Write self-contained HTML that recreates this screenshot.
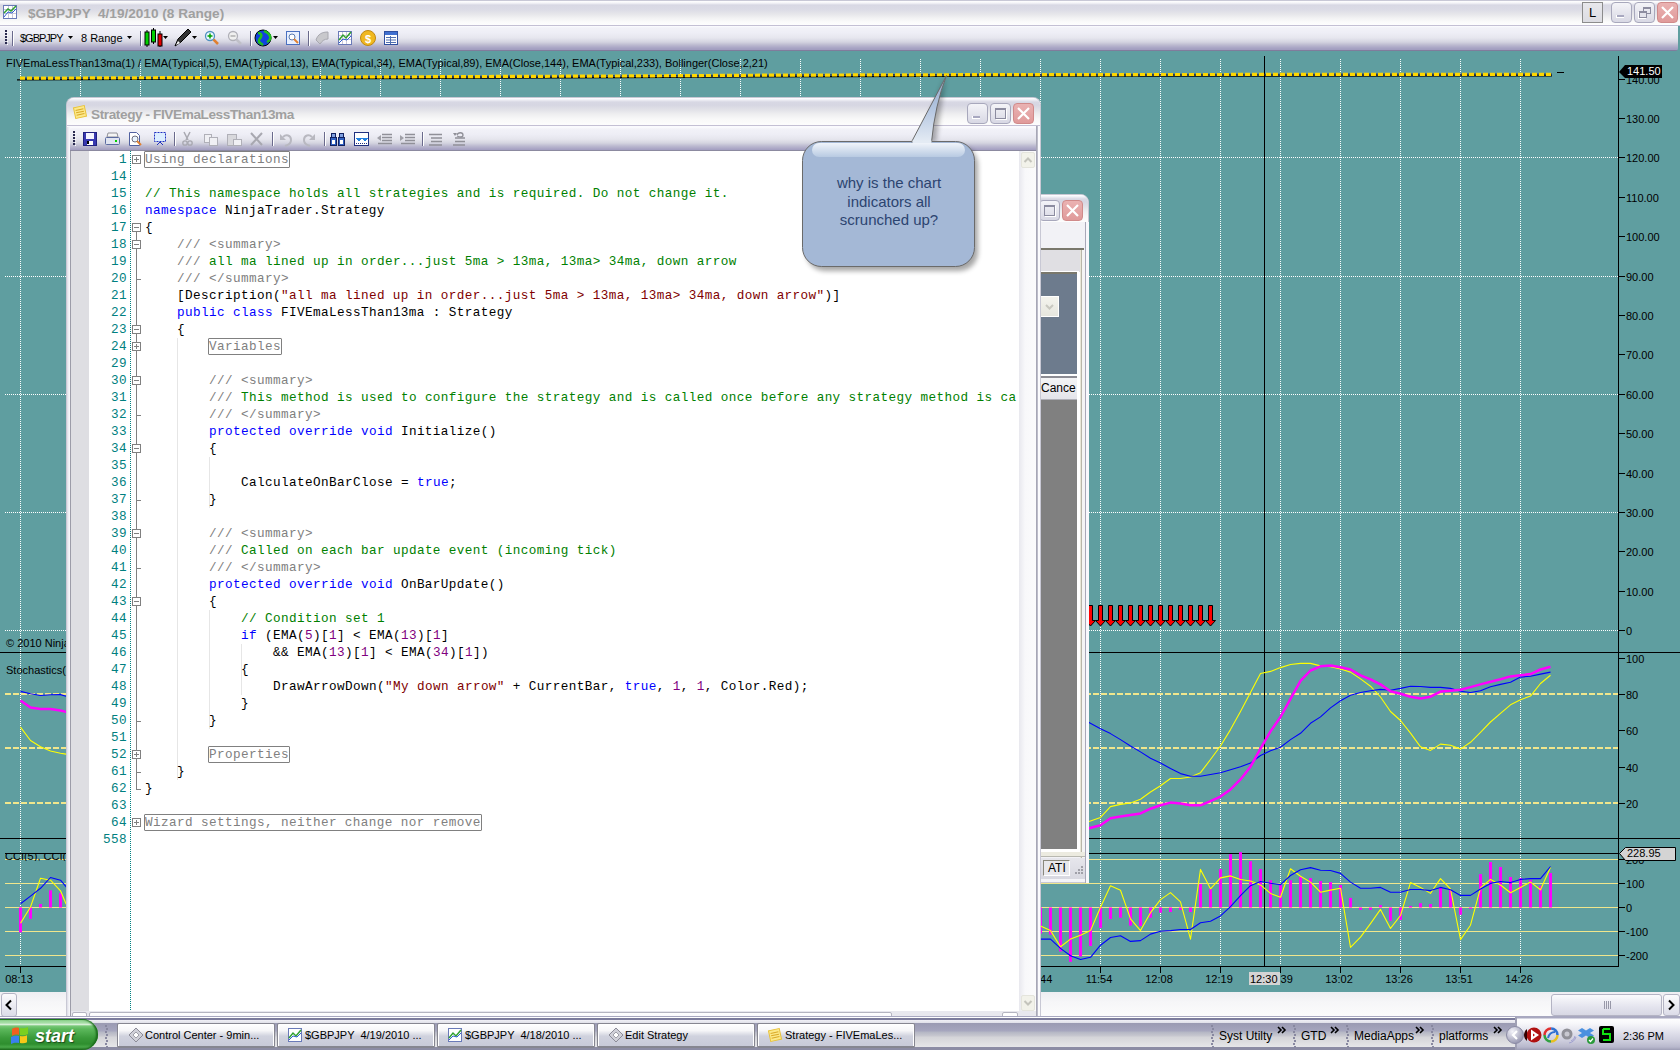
<!DOCTYPE html><html><head><meta charset="utf-8"><style>
*{box-sizing:border-box;margin:0;padding:0}
html,body{width:1680px;height:1050px;overflow:hidden;background:#5f9ea0;font-family:'Liberation Sans', sans-serif}
.a{position:absolute}
.t11{font-size:11px;line-height:13px;color:#000;white-space:nowrap}
svg{position:absolute;left:0;top:0;overflow:visible}
</style></head><body>
<div class="a" style="left:0;top:0;width:1680px;height:26px;background:linear-gradient(#c8c8d6 0,#c8c8d6 1px,#ffffff 1px,#f4f4f8 3px,#d8d8e4 5px,#dcdce6 10px,#e6e6ea 14px,#f2f2f3 18px,#fbfbfb 22px,#fefefe 25px,#c4c0d4 25px,#c4c0d4 26px)"></div>
<div class="a" style="left:28px;top:5px;font:bold 13.6px/17px 'Liberation Sans', sans-serif;color:#a0a0a0;white-space:pre">$GBPJPY  4/19/2010 (8 Range)</div>
<div class="a" style="left:0;top:26px;width:1678px;height:25px;background:linear-gradient(#fcfcff 0,#f2f2f8 2px,#eeeef6 7px,#e6e6ee 12px,#d4d4e0 16px,#bcbad0 19px,#a8a4c4 22px,#a29ec0 23.5px,#807c9c 24px);border-bottom-right-radius:3px"></div>
<svg class="a" width="1680" height="1050"><rect x="3.5" y="5.5" width="13" height="13" fill="#fff" stroke="#6a7ab8"/><path d="M4 9.5h12M4 13.5h12M8.5 6v12M12.5 6v12" stroke="#c8c8d8"/><path d="M4 13L8 9L11 11L16 6" fill="none" stroke="#30a030" stroke-width="1.5"/><path d="M4 17L8 12L12 13L16 9" fill="none" stroke="#3060d0"/></svg><div class="a" style="left:1582px;top:2px;width:21px;height:21px;border:1px solid #8c8c8c;background:linear-gradient(#e8e8ec,#dcdce2);font:13px/19px 'Liberation Sans', sans-serif;text-align:center;color:#000">L</div><div class="a" style="left:1611px;top:2px;width:21px;height:21px;border-radius:4px;border:1px solid #a8a8bc;background:linear-gradient(#f4f4f8,#d8d8e4)"></div><div class="a" style="left:1616px;top:15px;width:8px;height:3px;background:#a8a8c0;border-left:1px solid #fff;border-bottom:1px solid #fff"></div><div class="a" style="left:1634px;top:2px;width:21px;height:21px;border-radius:4px;border:1px solid #a8a8bc;background:linear-gradient(#f4f4f8,#d8d8e4)"></div><div class="a" style="left:1643px;top:7px;width:8px;height:7px;border:1px solid #8c8ca0;border-top:2px solid #8c8ca0"></div><div class="a" style="left:1639px;top:11px;width:8px;height:7px;border:1px solid #8c8ca0;border-top:2px solid #8c8ca0;background:#e4e4ec;box-shadow:-1px 1px 0 #fff"></div><div class="a" style="left:1657px;top:2px;width:21px;height:21px;border-radius:4px;border:1px solid #d08a8a;background:linear-gradient(#eab2b2,#e09a9a)"></div><svg class="a" style="left:1657px;top:2px" width="21" height="21"><path d="M5 5L16 16M16 5L5 16" stroke="#fff" stroke-width="2.2"/></svg><svg class="a" width="1680" height="1050"><rect x="5" y="30" width="2" height="2" fill="#2a2a50"/><rect x="7" y="32" width="1" height="1" fill="#fff"/><rect x="5" y="33" width="2" height="2" fill="#2a2a50"/><rect x="7" y="35" width="1" height="1" fill="#fff"/><rect x="5" y="36" width="2" height="2" fill="#2a2a50"/><rect x="7" y="38" width="1" height="1" fill="#fff"/><rect x="5" y="39" width="2" height="2" fill="#2a2a50"/><rect x="7" y="41" width="1" height="1" fill="#fff"/><rect x="5" y="42" width="2" height="2" fill="#2a2a50"/><rect x="7" y="44" width="1" height="1" fill="#fff"/><line x1="12.5" y1="31" x2="12.5" y2="46" stroke="#6a6a8c"/><line x1="13.5" y1="31" x2="13.5" y2="46" stroke="#fff"/><path d="M68 36h5l-2.5 3z" fill="#000"/><path d="M127 36h5l-2.5 3z" fill="#000"/><line x1="140.5" y1="31" x2="140.5" y2="46" stroke="#6a6a8c"/><line x1="141.5" y1="31" x2="141.5" y2="46" stroke="#fff"/><line x1="147" y1="30" x2="147" y2="47" stroke="#000"/><rect x="145" y="32" width="4" height="13" fill="#00d000" stroke="#000"/><line x1="153.5" y1="28" x2="153.5" y2="44" stroke="#000"/><rect x="151.5" y="30" width="4" height="12" fill="#00d000" stroke="#000"/><line x1="160" y1="31" x2="160" y2="47" stroke="#000"/><rect x="158" y="34" width="4" height="12" fill="#e00000" stroke="#000"/><path d="M163 36h5l-2.5 3z" fill="#000"/><path d="M175 46L178 39L188 29L191 32L181 42z" fill="#333" stroke="#000"/><path d="M176 45l2-4 2 2z" fill="#fff"/><path d="M192 36h5l-2.5 3z" fill="#000"/><circle cx="210" cy="36" r="4.5" fill="#e8f8ff" stroke="#5090c0" stroke-width="1.3"/><path d="M213.5 39.5L218 44" stroke="#e08030" stroke-width="2.5"/><path d="M207.5 36h5M210 33.5v5" stroke="#00a000" stroke-width="1.5"/><circle cx="233" cy="36" r="4.5" fill="#f0f0f0" stroke="#b0b0b8" stroke-width="1.3"/><path d="M236.5 39.5L241 44" stroke="#c0c0c8" stroke-width="2.5"/><path d="M230.5 36h5" stroke="#b0b0b0" stroke-width="1.5"/><line x1="250.5" y1="31" x2="250.5" y2="46" stroke="#6a6a8c"/><line x1="251.5" y1="31" x2="251.5" y2="46" stroke="#fff"/><circle cx="263" cy="38" r="8" fill="#1040e0" stroke="#000" stroke-width="1"/><path d="M258 33c3 0 4 2 3 4s-3 2-2 5c1 1 3 2 4 3M264 31c2 1 5 2 6 5s-1 5-3 6" fill="none" stroke="#20c020" stroke-width="2.5"/><path d="M273 36h5l-2.5 3z" fill="#000"/><rect x="286.5" y="31.5" width="13" height="13" fill="#e8f0ff" stroke="#4a70c0"/><circle cx="292" cy="37" r="3" fill="#fff" stroke="#5a7ab0"/><path d="M294 39l4 4" stroke="#e08030" stroke-width="2"/><line x1="308.5" y1="31" x2="308.5" y2="46" stroke="#6a6a8c"/><line x1="309.5" y1="31" x2="309.5" y2="46" stroke="#fff"/><path d="M316 40c2-6 6-8 12-8v7c-4 0-6 2-8 5z" fill="#c8c8cc" stroke="#a8a8b0"/><rect x="338.5" y="31.5" width="13" height="13" fill="#fff" stroke="#6a7ab8"/><path d="M339 35.5h12M339 39.5h12M342.5 32v12M346.5 32v12" stroke="#c8c8d8"/><path d="M339 40L343 35L346 38L351 32" fill="none" stroke="#30a030" stroke-width="1.5"/><path d="M339 43L343 39L347 40L351 36" fill="none" stroke="#3060d0"/><circle cx="368" cy="38" r="7.5" fill="#f0b820" stroke="#c08810"/><text x="368" y="42.5" font-family="'Liberation Sans', sans-serif" font-weight="bold" font-size="11" fill="#fff" text-anchor="middle">$</text><rect x="384.5" y="31.5" width="13" height="13" fill="#fff" stroke="#3050a0"/><rect x="385" y="32" width="12" height="3" fill="#4070d0"/><path d="M386 37.5h10M386 40h10M386 42.5h10M390.5 36v8" stroke="#5070b0"/></svg><div class="a" style="left:20px;top:32px;font:11px/13px 'Liberation Sans', sans-serif;color:#000;letter-spacing:-1px">$GBPJPY</div><div class="a" style="left:81px;top:32px;font:11px/13px 'Liberation Sans', sans-serif;color:#000">8 Range</div><svg width="1680" height="1050" style="position:absolute;left:0;top:0"><line x1="20.5" y1="59" x2="20.5" y2="964" stroke="#fff" stroke-width="1" stroke-dasharray="1 1"/><line x1="80.5" y1="59" x2="80.5" y2="964" stroke="#fff" stroke-width="1" stroke-dasharray="1 1"/><line x1="140.5" y1="59" x2="140.5" y2="964" stroke="#fff" stroke-width="1" stroke-dasharray="1 1"/><line x1="200.5" y1="59" x2="200.5" y2="964" stroke="#fff" stroke-width="1" stroke-dasharray="1 1"/><line x1="260.5" y1="59" x2="260.5" y2="964" stroke="#fff" stroke-width="1" stroke-dasharray="1 1"/><line x1="320.5" y1="59" x2="320.5" y2="964" stroke="#fff" stroke-width="1" stroke-dasharray="1 1"/><line x1="380.5" y1="59" x2="380.5" y2="964" stroke="#fff" stroke-width="1" stroke-dasharray="1 1"/><line x1="440.5" y1="59" x2="440.5" y2="964" stroke="#fff" stroke-width="1" stroke-dasharray="1 1"/><line x1="500.5" y1="59" x2="500.5" y2="964" stroke="#fff" stroke-width="1" stroke-dasharray="1 1"/><line x1="560.5" y1="59" x2="560.5" y2="964" stroke="#fff" stroke-width="1" stroke-dasharray="1 1"/><line x1="620.5" y1="59" x2="620.5" y2="964" stroke="#fff" stroke-width="1" stroke-dasharray="1 1"/><line x1="680.5" y1="59" x2="680.5" y2="964" stroke="#fff" stroke-width="1" stroke-dasharray="1 1"/><line x1="740.5" y1="59" x2="740.5" y2="964" stroke="#fff" stroke-width="1" stroke-dasharray="1 1"/><line x1="800.5" y1="59" x2="800.5" y2="964" stroke="#fff" stroke-width="1" stroke-dasharray="1 1"/><line x1="860.5" y1="59" x2="860.5" y2="964" stroke="#fff" stroke-width="1" stroke-dasharray="1 1"/><line x1="920.5" y1="59" x2="920.5" y2="964" stroke="#fff" stroke-width="1" stroke-dasharray="1 1"/><line x1="980.5" y1="59" x2="980.5" y2="964" stroke="#fff" stroke-width="1" stroke-dasharray="1 1"/><line x1="1040.5" y1="59" x2="1040.5" y2="964" stroke="#fff" stroke-width="1" stroke-dasharray="1 1"/><line x1="1100.5" y1="59" x2="1100.5" y2="964" stroke="#fff" stroke-width="1" stroke-dasharray="1 1"/><line x1="1160.5" y1="59" x2="1160.5" y2="964" stroke="#fff" stroke-width="1" stroke-dasharray="1 1"/><line x1="1220.5" y1="59" x2="1220.5" y2="964" stroke="#fff" stroke-width="1" stroke-dasharray="1 1"/><line x1="1280.5" y1="59" x2="1280.5" y2="964" stroke="#fff" stroke-width="1" stroke-dasharray="1 1"/><line x1="1340.5" y1="59" x2="1340.5" y2="964" stroke="#fff" stroke-width="1" stroke-dasharray="1 1"/><line x1="1400.5" y1="59" x2="1400.5" y2="964" stroke="#fff" stroke-width="1" stroke-dasharray="1 1"/><line x1="1460.5" y1="59" x2="1460.5" y2="964" stroke="#fff" stroke-width="1" stroke-dasharray="1 1"/><line x1="1520.5" y1="59" x2="1520.5" y2="964" stroke="#fff" stroke-width="1" stroke-dasharray="1 1"/><line x1="5" y1="157.5" x2="1618" y2="157.5" stroke="#fff" stroke-width="1" stroke-dasharray="1 1"/><line x1="5" y1="276.5" x2="1618" y2="276.5" stroke="#fff" stroke-width="1" stroke-dasharray="1 1"/><line x1="5" y1="394.5" x2="1618" y2="394.5" stroke="#fff" stroke-width="1" stroke-dasharray="1 1"/><line x1="5" y1="512.5" x2="1618" y2="512.5" stroke="#fff" stroke-width="1" stroke-dasharray="1 1"/><line x1="5" y1="630.5" x2="1618" y2="630.5" stroke="#fff" stroke-width="1" stroke-dasharray="1 1"/><line x1="5" y1="694" x2="1618" y2="694" stroke="#f0e68c" stroke-width="2" stroke-dasharray="6 2"/><line x1="5" y1="748" x2="1618" y2="748" stroke="#f0e68c" stroke-width="2" stroke-dasharray="6 2"/><line x1="5" y1="803" x2="1618" y2="803" stroke="#f0e68c" stroke-width="2" stroke-dasharray="6 2"/><line x1="5" y1="859.5" x2="1618" y2="859.5" stroke="#f0e68c" stroke-width="1"/><line x1="5" y1="883.5" x2="1618" y2="883.5" stroke="#f0e68c" stroke-width="1"/><line x1="5" y1="907.5" x2="1618" y2="907.5" stroke="#f0e68c" stroke-width="1"/><line x1="5" y1="931.5" x2="1618" y2="931.5" stroke="#f0e68c" stroke-width="1"/><line x1="5" y1="955.5" x2="1618" y2="955.5" stroke="#f0e68c" stroke-width="1"/><line x1="0" y1="652.5" x2="1680" y2="652.5" stroke="#000" stroke-width="1"/><line x1="0" y1="838.5" x2="1680" y2="838.5" stroke="#000" stroke-width="1"/><line x1="5" y1="966.5" x2="1619" y2="966.5" stroke="#000" stroke-width="1"/><line x1="1618.5" y1="56" x2="1618.5" y2="966" stroke="#000" stroke-width="1"/><line x1="1264.5" y1="56" x2="1264.5" y2="966" stroke="#000" stroke-width="1"/><line x1="5" y1="853.5" x2="1618" y2="853.5" stroke="#000" stroke-width="1"/><line x1="1618" y1="79.5" x2="1625" y2="79.5" stroke="#000" stroke-width="1"/><line x1="1618" y1="118.5" x2="1625" y2="118.5" stroke="#000" stroke-width="1"/><line x1="1618" y1="157.5" x2="1625" y2="157.5" stroke="#000" stroke-width="1"/><line x1="1618" y1="197.5" x2="1625" y2="197.5" stroke="#000" stroke-width="1"/><line x1="1618" y1="236.5" x2="1625" y2="236.5" stroke="#000" stroke-width="1"/><line x1="1618" y1="276.5" x2="1625" y2="276.5" stroke="#000" stroke-width="1"/><line x1="1618" y1="315.5" x2="1625" y2="315.5" stroke="#000" stroke-width="1"/><line x1="1618" y1="354.5" x2="1625" y2="354.5" stroke="#000" stroke-width="1"/><line x1="1618" y1="394.5" x2="1625" y2="394.5" stroke="#000" stroke-width="1"/><line x1="1618" y1="433.5" x2="1625" y2="433.5" stroke="#000" stroke-width="1"/><line x1="1618" y1="473.5" x2="1625" y2="473.5" stroke="#000" stroke-width="1"/><line x1="1618" y1="512.5" x2="1625" y2="512.5" stroke="#000" stroke-width="1"/><line x1="1618" y1="551.5" x2="1625" y2="551.5" stroke="#000" stroke-width="1"/><line x1="1618" y1="591.5" x2="1625" y2="591.5" stroke="#000" stroke-width="1"/><line x1="1618" y1="630.5" x2="1625" y2="630.5" stroke="#000" stroke-width="1"/><line x1="1618" y1="658.5" x2="1625" y2="658.5" stroke="#000" stroke-width="1"/><line x1="1618" y1="694.5" x2="1625" y2="694.5" stroke="#000" stroke-width="1"/><line x1="1618" y1="730.5" x2="1625" y2="730.5" stroke="#000" stroke-width="1"/><line x1="1618" y1="767.5" x2="1625" y2="767.5" stroke="#000" stroke-width="1"/><line x1="1618" y1="803.5" x2="1625" y2="803.5" stroke="#000" stroke-width="1"/><line x1="1618" y1="859.5" x2="1625" y2="859.5" stroke="#000" stroke-width="1"/><line x1="1618" y1="883.5" x2="1625" y2="883.5" stroke="#000" stroke-width="1"/><line x1="1618" y1="907.5" x2="1625" y2="907.5" stroke="#000" stroke-width="1"/><line x1="1618" y1="931.5" x2="1625" y2="931.5" stroke="#000" stroke-width="1"/><line x1="1618" y1="955.5" x2="1625" y2="955.5" stroke="#000" stroke-width="1"/><line x1="20.5" y1="967" x2="20.5" y2="973" stroke="#000" stroke-width="1"/><line x1="80.5" y1="967" x2="80.5" y2="973" stroke="#000" stroke-width="1"/><line x1="140.5" y1="967" x2="140.5" y2="973" stroke="#000" stroke-width="1"/><line x1="200.5" y1="967" x2="200.5" y2="973" stroke="#000" stroke-width="1"/><line x1="260.5" y1="967" x2="260.5" y2="973" stroke="#000" stroke-width="1"/><line x1="320.5" y1="967" x2="320.5" y2="973" stroke="#000" stroke-width="1"/><line x1="380.5" y1="967" x2="380.5" y2="973" stroke="#000" stroke-width="1"/><line x1="440.5" y1="967" x2="440.5" y2="973" stroke="#000" stroke-width="1"/><line x1="500.5" y1="967" x2="500.5" y2="973" stroke="#000" stroke-width="1"/><line x1="560.5" y1="967" x2="560.5" y2="973" stroke="#000" stroke-width="1"/><line x1="620.5" y1="967" x2="620.5" y2="973" stroke="#000" stroke-width="1"/><line x1="680.5" y1="967" x2="680.5" y2="973" stroke="#000" stroke-width="1"/><line x1="740.5" y1="967" x2="740.5" y2="973" stroke="#000" stroke-width="1"/><line x1="800.5" y1="967" x2="800.5" y2="973" stroke="#000" stroke-width="1"/><line x1="860.5" y1="967" x2="860.5" y2="973" stroke="#000" stroke-width="1"/><line x1="920.5" y1="967" x2="920.5" y2="973" stroke="#000" stroke-width="1"/><line x1="980.5" y1="967" x2="980.5" y2="973" stroke="#000" stroke-width="1"/><line x1="1040.5" y1="967" x2="1040.5" y2="973" stroke="#000" stroke-width="1"/><line x1="1100.5" y1="967" x2="1100.5" y2="973" stroke="#000" stroke-width="1"/><line x1="1160.5" y1="967" x2="1160.5" y2="973" stroke="#000" stroke-width="1"/><line x1="1220.5" y1="967" x2="1220.5" y2="973" stroke="#000" stroke-width="1"/><line x1="1280.5" y1="967" x2="1280.5" y2="973" stroke="#000" stroke-width="1"/><line x1="1340.5" y1="967" x2="1340.5" y2="973" stroke="#000" stroke-width="1"/><line x1="1400.5" y1="967" x2="1400.5" y2="973" stroke="#000" stroke-width="1"/><line x1="1460.5" y1="967" x2="1460.5" y2="973" stroke="#000" stroke-width="1"/><line x1="1520.5" y1="967" x2="1520.5" y2="973" stroke="#000" stroke-width="1"/><rect x="19.0" y="907.5" width="3" height="24.9" fill="#ff00ff"/><rect x="29.0" y="907.5" width="3" height="11.3" fill="#ff00ff"/><rect x="39.0" y="904.0" width="3" height="3.5" fill="#ff00ff"/><rect x="49.0" y="890.3" width="3" height="17.2" fill="#ff00ff"/><rect x="59.0" y="893.2" width="3" height="14.3" fill="#ff00ff"/><rect x="1039.0" y="907.5" width="3" height="26.1" fill="#ff00ff"/><rect x="1049.0" y="907.5" width="3" height="27.2" fill="#ff00ff"/><rect x="1059.0" y="907.5" width="3" height="43.9" fill="#ff00ff"/><rect x="1069.0" y="907.5" width="3" height="54.3" fill="#ff00ff"/><rect x="1079.0" y="907.5" width="3" height="48.9" fill="#ff00ff"/><rect x="1089.0" y="907.5" width="3" height="38.5" fill="#ff00ff"/><rect x="1099.0" y="907.5" width="3" height="20.4" fill="#ff00ff"/><rect x="1109.0" y="907.5" width="3" height="11.5" fill="#ff00ff"/><rect x="1119.0" y="907.5" width="3" height="10.2" fill="#ff00ff"/><rect x="1129.0" y="907.5" width="3" height="18.1" fill="#ff00ff"/><rect x="1139.0" y="907.5" width="3" height="18.4" fill="#ff00ff"/><rect x="1149.0" y="907.5" width="3" height="10.2" fill="#ff00ff"/><rect x="1159.0" y="907.5" width="3" height="5.2" fill="#ff00ff"/><rect x="1169.0" y="907.5" width="3" height="4.5" fill="#ff00ff"/><rect x="1179.0" y="907.5" width="3" height="2.5" fill="#ff00ff"/><rect x="1189.0" y="907.5" width="3" height="4.5" fill="#ff00ff"/><rect x="1199.0" y="884.1" width="3" height="23.4" fill="#ff00ff"/><rect x="1209.0" y="889.2" width="3" height="18.3" fill="#ff00ff"/><rect x="1219.0" y="869.1" width="3" height="38.4" fill="#ff00ff"/><rect x="1229.0" y="854.2" width="3" height="53.3" fill="#ff00ff"/><rect x="1239.0" y="852.1" width="3" height="55.4" fill="#ff00ff"/><rect x="1249.0" y="861.2" width="3" height="46.3" fill="#ff00ff"/><rect x="1259.0" y="869.1" width="3" height="38.4" fill="#ff00ff"/><rect x="1269.0" y="880.2" width="3" height="27.3" fill="#ff00ff"/><rect x="1279.0" y="884.9" width="3" height="22.6" fill="#ff00ff"/><rect x="1289.0" y="880.2" width="3" height="27.3" fill="#ff00ff"/><rect x="1299.0" y="877.0" width="3" height="30.5" fill="#ff00ff"/><rect x="1309.0" y="878.1" width="3" height="29.4" fill="#ff00ff"/><rect x="1319.0" y="881.0" width="3" height="26.5" fill="#ff00ff"/><rect x="1329.0" y="882.1" width="3" height="25.4" fill="#ff00ff"/><rect x="1339.0" y="885.0" width="3" height="22.5" fill="#ff00ff"/><rect x="1349.0" y="897.9" width="3" height="9.6" fill="#ff00ff"/><rect x="1359.0" y="907.5" width="3" height="2.4" fill="#ff00ff"/><rect x="1369.0" y="907.5" width="3" height="2.4" fill="#ff00ff"/><rect x="1379.0" y="905.0" width="3" height="2.5" fill="#ff00ff"/><rect x="1389.0" y="907.5" width="3" height="13.3" fill="#ff00ff"/><rect x="1399.0" y="907.5" width="3" height="12.4" fill="#ff00ff"/><rect x="1409.0" y="905.9" width="3" height="1.6" fill="#ff00ff"/><rect x="1419.0" y="903.2" width="3" height="4.3" fill="#ff00ff"/><rect x="1429.0" y="904.0" width="3" height="3.5" fill="#ff00ff"/><rect x="1439.0" y="887.9" width="3" height="19.6" fill="#ff00ff"/><rect x="1449.0" y="889.8" width="3" height="17.7" fill="#ff00ff"/><rect x="1459.0" y="907.5" width="3" height="7.2" fill="#ff00ff"/><rect x="1469.0" y="907.5" width="3" height="1.3" fill="#ff00ff"/><rect x="1479.0" y="874.1" width="3" height="33.4" fill="#ff00ff"/><rect x="1489.0" y="862.0" width="3" height="45.5" fill="#ff00ff"/><rect x="1499.0" y="867.0" width="3" height="40.5" fill="#ff00ff"/><rect x="1509.0" y="877.0" width="3" height="30.5" fill="#ff00ff"/><rect x="1519.0" y="878.1" width="3" height="29.4" fill="#ff00ff"/><rect x="1529.0" y="879.9" width="3" height="27.6" fill="#ff00ff"/><rect x="1539.0" y="885.8" width="3" height="21.7" fill="#ff00ff"/><rect x="1549.0" y="873.0" width="3" height="34.5" fill="#ff00ff"/><polyline fill="none" stroke="#ffff00" stroke-width="1.1" stroke-linejoin="round" points="20.5,923.2 30.5,907.0 40.5,878.3 50.5,880.2 60.5,890.8 66.0,903.7 80.5,924.8"/><polyline fill="none" stroke="#0000ff" stroke-width="1.1" stroke-linejoin="round" points="20.5,903.7 30.5,896.1 40.5,888.3 50.5,877.5 60.5,880.2 66.0,886.7 80.5,897.3"/><polyline fill="none" stroke="#ffff00" stroke-width="1.1" stroke-linejoin="round" points="1040.5,925.9 1050.5,930.6 1060.5,946.8 1070.5,939.1 1080.5,935.2 1090.5,930.6 1100.5,907.3 1110.5,885.7 1120.5,890.3 1130.5,918.9 1140.5,930.6 1150.5,912.7 1160.5,899.6 1170.5,892.6 1180.5,901.9 1190.5,939.1 1200.5,869.4 1210.5,888.8 1220.5,877.9 1230.5,875.9 1240.5,879.5 1250.5,881.0 1260.5,884.9 1270.5,893.4 1280.5,897.3 1290.5,868.8 1300.5,876.2 1310.5,882.1 1320.5,892.2 1330.5,890.1 1340.5,888.2 1350.5,947.4 1360.5,937.2 1370.5,923.6 1380.5,909.4 1390.5,928.4 1400.5,915.5 1410.5,882.6 1420.5,887.4 1430.5,893.4 1440.5,878.6 1450.5,889.0 1460.5,939.6 1470.5,925.2 1480.5,887.9 1490.5,879.4 1500.5,885.0 1510.5,892.7 1520.5,887.4 1530.5,882.1 1540.5,889.8 1550.5,867.3"/><polyline fill="none" stroke="#0000ff" stroke-width="1.1" stroke-linejoin="round" points="1040.5,939.1 1050.5,939.1 1060.5,948.4 1070.5,955.8 1080.5,959.5 1090.5,957.3 1100.5,945.2 1110.5,937.5 1120.5,935.7 1130.5,941.4 1140.5,940.6 1150.5,934.1 1160.5,931.3 1170.5,930.6 1180.5,929.5 1190.5,929.5 1200.5,922.8 1210.5,921.3 1220.5,915.9 1230.5,906.6 1240.5,895.7 1250.5,885.7 1260.5,881.5 1270.5,883.3 1280.5,884.6 1290.5,875.5 1300.5,869.7 1310.5,867.6 1320.5,870.2 1330.5,870.5 1340.5,873.4 1350.5,882.1 1360.5,888.2 1370.5,888.2 1380.5,887.4 1390.5,892.2 1400.5,892.2 1410.5,889.5 1420.5,889.5 1430.5,890.6 1440.5,887.4 1450.5,889.8 1460.5,895.4 1470.5,895.4 1480.5,889.0 1490.5,883.4 1500.5,881.5 1510.5,882.6 1520.5,879.4 1530.5,878.6 1540.5,878.6 1550.5,866.5"/><polyline fill="none" stroke="#ffff00" stroke-width="1.1" stroke-linejoin="round" points="20.5,727.1 30.5,740.5 40.5,746.7 50.5,751.0 60.5,753.3 66.0,754.1 80.5,755.3"/><polyline fill="none" stroke="#0000ff" stroke-width="1.1" stroke-linejoin="round" points="20.5,691.4 30.5,693.8 40.5,695.5 50.5,694.8 60.5,694.6 66.0,696.2 80.5,698.6"/><polyline fill="none" stroke="#ff00ff" stroke-width="2.5" stroke-linejoin="round" points="20.5,700.5 30.5,707.6 40.5,709.0 50.5,709.0 60.5,710.5 66.0,711.9 80.5,714.0"/><polyline fill="none" stroke="#ffff00" stroke-width="1.1" stroke-linejoin="round" points="1080.5,824.0 1089.0,821.6 1100.5,817.4 1110.5,806.6 1120.5,804.4 1130.5,803.0 1140.5,799.3 1150.5,792.0 1160.5,785.7 1170.5,778.5 1180.5,778.5 1190.5,777.0 1200.5,772.7 1210.5,759.5 1220.5,746.0 1230.5,729.6 1240.5,711.5 1250.5,692.5 1260.5,673.5 1270.5,671.4 1280.5,667.6 1290.5,664.5 1300.5,663.4 1310.5,663.4 1320.5,665.9 1330.5,666.6 1340.5,669.0 1350.5,672.1 1360.5,678.9 1370.5,686.2 1380.5,697.0 1390.5,711.5 1400.5,720.5 1410.5,733.2 1420.5,746.8 1430.5,750.4 1440.5,744.1 1450.5,745.3 1460.5,749.1 1470.5,742.3 1480.5,732.3 1490.5,722.0 1500.5,713.3 1510.5,704.8 1520.5,699.7 1530.5,696.1 1540.5,683.5 1550.5,675.3"/><polyline fill="none" stroke="#0000ff" stroke-width="1.1" stroke-linejoin="round" points="1080.5,723.0 1089.0,722.4 1100.5,728.7 1110.5,733.6 1120.5,739.6 1130.5,746.0 1140.5,751.9 1150.5,758.2 1160.5,763.1 1170.5,768.6 1180.5,773.6 1190.5,776.3 1200.5,776.3 1210.5,774.5 1220.5,772.7 1230.5,769.8 1240.5,766.7 1250.5,763.1 1260.5,755.5 1270.5,750.8 1280.5,747.2 1290.5,739.6 1300.5,733.3 1310.5,723.3 1320.5,716.9 1330.5,707.9 1340.5,700.7 1350.5,695.2 1360.5,692.5 1370.5,690.7 1380.5,689.4 1390.5,690.2 1400.5,688.4 1410.5,686.2 1420.5,686.5 1430.5,687.4 1440.5,687.4 1450.5,688.4 1460.5,691.2 1470.5,692.5 1480.5,690.7 1490.5,686.7 1500.5,684.4 1510.5,682.2 1520.5,677.1 1530.5,676.2 1540.5,674.1 1550.5,672.1"/><polyline fill="none" stroke="#ff00ff" stroke-width="2.5" stroke-linejoin="round" points="1080.5,830.0 1089.0,828.3 1100.5,825.2 1110.5,818.3 1120.5,816.5 1130.5,815.0 1140.5,813.4 1150.5,808.7 1160.5,805.3 1170.5,802.6 1180.5,803.5 1190.5,805.3 1200.5,805.3 1210.5,801.1 1220.5,796.6 1230.5,789.4 1240.5,779.4 1250.5,766.7 1260.5,748.6 1270.5,731.4 1280.5,717.0 1290.5,698.9 1300.5,680.8 1310.5,670.5 1320.5,666.3 1330.5,665.4 1340.5,667.2 1350.5,669.5 1360.5,675.3 1370.5,679.3 1380.5,684.4 1390.5,691.2 1400.5,693.8 1410.5,696.7 1420.5,698.5 1430.5,696.7 1440.5,691.6 1450.5,690.7 1460.5,689.8 1470.5,687.1 1480.5,684.4 1490.5,681.7 1500.5,679.3 1510.5,676.4 1520.5,675.3 1530.5,674.1 1540.5,669.5 1550.5,666.8"/></svg><div class="a t11" style="left:1626px;top:74px">140.00</div><div class="a t11" style="left:1626px;top:113px">130.00</div><div class="a t11" style="left:1626px;top:152px">120.00</div><div class="a t11" style="left:1626px;top:192px">110.00</div><div class="a t11" style="left:1626px;top:231px">100.00</div><div class="a t11" style="left:1626px;top:271px">90.00</div><div class="a t11" style="left:1626px;top:310px">80.00</div><div class="a t11" style="left:1626px;top:349px">70.00</div><div class="a t11" style="left:1626px;top:389px">60.00</div><div class="a t11" style="left:1626px;top:428px">50.00</div><div class="a t11" style="left:1626px;top:468px">40.00</div><div class="a t11" style="left:1626px;top:507px">30.00</div><div class="a t11" style="left:1626px;top:546px">20.00</div><div class="a t11" style="left:1626px;top:586px">10.00</div><div class="a t11" style="left:1626px;top:625px">0</div><div class="a t11" style="left:1626px;top:653px">100</div><div class="a t11" style="left:1626px;top:689px">80</div><div class="a t11" style="left:1626px;top:725px">60</div><div class="a t11" style="left:1626px;top:762px">40</div><div class="a t11" style="left:1626px;top:798px">20</div><div class="a t11" style="left:1626px;top:854px">200</div><div class="a t11" style="left:1626px;top:878px">100</div><div class="a t11" style="left:1626px;top:902px">0</div><div class="a t11" style="left:1626px;top:926px">-100</div><div class="a t11" style="left:1626px;top:950px">-200</div><style>.code{font-family:"Liberation Mono",monospace;font-size:12.67px;line-height:17px;white-space:pre;letter-spacing:0.4px}</style><svg class="a" width="1680" height="1050"><polyline points="17,79.8 300,78.8 620,77.6 760,76.8 1000,76.19999999999999 1552,75.89999999999999" fill="none" stroke="#000" stroke-width="1.3"/><polyline points="20,78.2 300,77.2 620,76 760,75.2 1000,74.6 1552,74.3" fill="none" stroke="#ffd700" stroke-width="3.2" stroke-dasharray="5 2"/><polyline points="20,78.2 300,77.2 620,76 760,75.2 1000,74.6 1552,74.3" fill="none" stroke="#202040" stroke-width="1.6" stroke-dasharray="1.5 5.5" stroke-dashoffset="-5.2"/><line x1="1557" y1="72.5" x2="1564" y2="72.5" stroke="#000" stroke-width="1"/><path d="M1088.5 605.5H1092.5V620.5H1095.5L1090.5 626L1085.5 620.5H1088.5Z" fill="#ff0000" stroke="#000" stroke-width="1"/><path d="M1098.5 605.5H1102.5V620.5H1105.5L1100.5 626L1095.5 620.5H1098.5Z" fill="#ff0000" stroke="#000" stroke-width="1"/><path d="M1108.5 605.5H1112.5V620.5H1115.5L1110.5 626L1105.5 620.5H1108.5Z" fill="#ff0000" stroke="#000" stroke-width="1"/><path d="M1118.5 605.5H1122.5V620.5H1125.5L1120.5 626L1115.5 620.5H1118.5Z" fill="#ff0000" stroke="#000" stroke-width="1"/><path d="M1128.5 605.5H1132.5V620.5H1135.5L1130.5 626L1125.5 620.5H1128.5Z" fill="#ff0000" stroke="#000" stroke-width="1"/><path d="M1138.5 605.5H1142.5V620.5H1145.5L1140.5 626L1135.5 620.5H1138.5Z" fill="#ff0000" stroke="#000" stroke-width="1"/><path d="M1148.5 605.5H1152.5V620.5H1155.5L1150.5 626L1145.5 620.5H1148.5Z" fill="#ff0000" stroke="#000" stroke-width="1"/><path d="M1158.5 605.5H1162.5V620.5H1165.5L1160.5 626L1155.5 620.5H1158.5Z" fill="#ff0000" stroke="#000" stroke-width="1"/><path d="M1168.5 605.5H1172.5V620.5H1175.5L1170.5 626L1165.5 620.5H1168.5Z" fill="#ff0000" stroke="#000" stroke-width="1"/><path d="M1178.5 605.5H1182.5V620.5H1185.5L1180.5 626L1175.5 620.5H1178.5Z" fill="#ff0000" stroke="#000" stroke-width="1"/><path d="M1188.5 605.5H1192.5V620.5H1195.5L1190.5 626L1185.5 620.5H1188.5Z" fill="#ff0000" stroke="#000" stroke-width="1"/><path d="M1198.5 605.5H1202.5V620.5H1205.5L1200.5 626L1195.5 620.5H1198.5Z" fill="#ff0000" stroke="#000" stroke-width="1"/><path d="M1208.5 605.5H1212.5V620.5H1215.5L1210.5 626L1205.5 620.5H1208.5Z" fill="#ff0000" stroke="#000" stroke-width="1"/></svg><div class="a t11" style="left:6px;top:57px">FIVEmaLessThan13ma(1) / EMA(Typical,5), EMA(Typical,13), EMA(Typical,34), EMA(Typical,89), EMA(Close,144), EMA(Typical,233), Bollinger(Close,2,21)</div><div class="a t11" style="left:6px;top:637px">&copy; 2010 NinjaTrader</div><div class="a t11" style="left:6px;top:664px">Stochastics(7,14,3)</div><div class="a" style="left:5px;top:853px;width:1200px;height:8px;overflow:hidden"><div class="a t11" style="left:0;top:-3px">CCI(5), CCI(14)</div></div><div class="a t11" style="left:-11px;top:973px;width:60px;text-align:center">08:13</div><div class="a t11" style="left:1009px;top:973px;width:60px;text-align:center">11:44</div><div class="a t11" style="left:1069px;top:973px;width:60px;text-align:center">11:54</div><div class="a t11" style="left:1129px;top:973px;width:60px;text-align:center">12:08</div><div class="a t11" style="left:1189px;top:973px;width:60px;text-align:center">12:19</div><div class="a t11" style="left:1249px;top:973px;width:60px;text-align:center">12:39</div><div class="a t11" style="left:1309px;top:973px;width:60px;text-align:center">13:02</div><div class="a t11" style="left:1369px;top:973px;width:60px;text-align:center">13:26</div><div class="a t11" style="left:1429px;top:973px;width:60px;text-align:center">13:51</div><div class="a t11" style="left:1489px;top:973px;width:60px;text-align:center">14:26</div><div class="a t11" style="left:1249px;top:972px;width:31px;height:13px;background:#d4d4d4;padding-left:1px;line-height:14px">12:30</div><svg class="a" width="1680" height="1050"><path d="M1619 72L1625 65H1662V78H1625z" fill="#000"/></svg><div class="a t11" style="left:1627px;top:65px;color:#fff;line-height:13px">141.50</div><svg class="a" width="1680" height="1050"><path d="M1619.5 853.5L1625.5 847.5H1675.5V860.5H1625.5z" fill="#d4d4d4" stroke="#000"/></svg><div class="a t11" style="left:1627px;top:847px">228.95</div><div class="a" style="left:0;top:992px;width:1680px;height:25px;background:linear-gradient(#eeeef2,#f6f6f8 10px,#fbfbfc)"></div><div class="a" style="left:1px;top:993px;width:16px;height:24px;border:1px solid #b4b4c4;border-radius:3px;background:linear-gradient(#fbfbfd,#dcdce8)"></div><svg class="a" style="left:1px;top:993px" width="16" height="24"><path d="M10 7.5L5.5 12L10 16.5" fill="none" stroke="#000" stroke-width="2"/></svg><div class="a" style="left:1551px;top:994px;width:111px;height:22px;border:1px solid #b4b4c4;border-radius:3px;background:linear-gradient(#fbfbfd,#e4e4ee 60%,#d8d8e4)"></div><svg class="a" style="left:1551px;top:994px" width="111" height="22"><path d="M53.5 7v8M55.5 7v8M57.5 7v8M59.5 7v8" stroke="#9898a8"/></svg><div class="a" style="left:1663px;top:994px;width:17px;height:22px;border:1px solid #b4b4c4;border-radius:3px;background:linear-gradient(#fbfbfd,#dcdce8)"></div><svg class="a" style="left:1663px;top:994px" width="17" height="22"><path d="M6 6.5L10.5 11L6 15.5" fill="none" stroke="#000" stroke-width="2"/></svg><div class="a" style="left:1000px;top:194px;width:89px;height:689px;background:#f4f4f8;border:1px solid #c8c8d4;border-radius:0 8px 0 0"></div><div class="a" style="left:1001px;top:195px;width:87px;height:27px;background:linear-gradient(#ffffff 0,#f8f8fc 1px,#d8d8e4 4px,#d6d6e2 7px,#e2e2e8 12px,#eeeef0 16px,#f8f8f8 21px,#fdfdfd 27px);border-radius:0 7px 0 0"></div><div class="a" style="left:1039px;top:200px;width:21px;height:21px;border-radius:4px;border:1px solid #a8a8bc;background:linear-gradient(#f4f4f8,#d8d8e4)"></div><div class="a" style="left:1044px;top:205px;width:11px;height:11px;border:1px solid #8c8ca0;border-top:2px solid #8c8ca0;box-shadow:1px 1px 0 #fff"></div><div class="a" style="left:1062px;top:200px;width:21px;height:21px;border-radius:4px;border:1px solid #d08a8a;background:linear-gradient(#eab2b2,#e09a9a)"></div><svg class="a" style="left:1062px;top:200px" width="21" height="21"><path d="M5 5L16 16M16 5L5 16" stroke="#fff" stroke-width="2.2"/></svg><div class="a" style="left:1001px;top:222px;width:84px;height:657px;background:#f2f2f6"></div><div class="a" style="left:1001px;top:248px;width:83px;height:2px;background:#7a786c"></div><div class="a" style="left:1001px;top:250px;width:80px;height:607px;background:#e0dfe3;border-right:1px solid #fff"></div><div class="a" style="left:1001px;top:271px;width:78px;height:105px;background:#fff"></div><div class="a" style="left:1001px;top:272px;width:76px;height:102px;background:#6d7b8d;border-top:2px solid #7a786c"></div><div class="a" style="left:1040px;top:296px;width:19px;height:21px;background:#fff;border:1px solid #fff"></div><div class="a" style="left:1041px;top:297px;width:17px;height:19px;background:linear-gradient(#f4f4ee,#e6e6de)"></div><svg class="a" style="left:1041px;top:297px" width="17" height="19"><path d="M5 8L8.5 11.5L12 8" fill="none" stroke="#c8c8c0" stroke-width="2"/></svg><div class="a" style="left:1001px;top:376px;width:76px;height:24px;background:linear-gradient(#f4f4f6,#e4e4ea);border-top:2px solid #8c8c94;border-bottom:1px solid #b0b0b8"></div><div class="a" style="left:1041px;top:381px;font:12px/15px 'Liberation Sans', sans-serif;color:#000">Cance</div><div class="a" style="left:1001px;top:400px;width:76px;height:449px;background:#808080"></div><div class="a" style="left:1001px;top:849px;width:79px;height:3px;background:#fff"></div><div class="a" style="left:1077px;top:272px;width:3px;height:580px;background:#fff"></div><div class="a" style="left:1080px;top:250px;width:5px;height:608px;background:linear-gradient(90deg,#e8e6d8 0,#e8e6d8 1px,#b8b6a8 1px,#b8b6a8 2px,#f4f4f4 2px)"></div><div class="a" style="left:1001px;top:852px;width:84px;height:5px;background:#ecebe0;border-bottom:1px solid #b8b8b0"></div><div class="a" style="left:1001px;top:858px;width:84px;height:21px;background:linear-gradient(#e6e6ec,#d8d8e0)"></div><div class="a" style="left:1043px;top:860px;width:27px;height:16px;background:#e8e8ec;border:1px solid;border-color:#8a887c #fff #fff #8a887c"></div><div class="a" style="left:1048px;top:861px;font:12px/14px 'Liberation Sans', sans-serif;color:#000">ATI</div><svg class="a" width="1680" height="1050"><rect x="1081" y="866" width="2" height="2" fill="#a0a0a8"/><rect x="1078" y="869" width="2" height="2" fill="#a0a0a8"/><rect x="1081" y="869" width="2" height="2" fill="#a0a0a8"/><rect x="1075" y="872" width="2" height="2" fill="#a0a0a8"/><rect x="1078" y="872" width="2" height="2" fill="#a0a0a8"/><rect x="1081" y="872" width="2" height="2" fill="#a0a0a8"/></svg><div class="a" style="left:1085px;top:222px;width:4px;height:661px;background:linear-gradient(90deg,#a8a8b8 0,#a8a8b8 1.3px,#f8f8fc 1.3px)"></div><div class="a" style="left:66px;top:97px;width:975px;height:960px;background:linear-gradient(90deg,#dcdce6,#f4f4f8 2px,#fbfbfd 4px);border-radius:8px 8px 0 0;border:1px solid #c8c8d4;border-bottom:none"></div><div class="a" style="left:67px;top:98px;width:973px;height:29px;background:linear-gradient(#ffffff 0,#f8f8fc 1px,#d8d8e4 4px,#d6d6e2 7px,#e2e2e8 12px,#eeeef0 16px,#f8f8f8 21px,#fdfdfd 27px,#c4c0d4 27px,#c4c0d4 28px,#fafafe 28px);border-radius:7px 7px 0 0"></div><div class="a" style="left:91px;top:106px;font:bold 13.6px/17px 'Liberation Sans', sans-serif;color:#a0a0a0;white-space:pre;letter-spacing:-0.4px">Strategy - FIVEmaLessThan13ma</div><svg class="a" style="left:72px;top:104px" width="16" height="16"><g transform="rotate(-12 8 8)"><rect x="2.5" y="2.5" width="11" height="11" fill="#fce98a" stroke="#e8c23a"/><line x1="4" y1="5.5" x2="12" y2="5.5" stroke="#d9a928"/><line x1="4" y1="8" x2="12" y2="8" stroke="#d9a928"/><line x1="4" y1="10.5" x2="12" y2="10.5" stroke="#d9a928"/></g></svg><div class="a" style="left:967px;top:103px;width:21px;height:21px;border-radius:4px;border:1px solid #a8a8bc;background:linear-gradient(#f4f4f8,#d8d8e4)"></div><div class="a" style="left:972px;top:116px;width:8px;height:3px;background:#a8a8c0;border-left:1px solid #fff;border-bottom:1px solid #fff"></div><div class="a" style="left:990px;top:103px;width:21px;height:21px;border-radius:4px;border:1px solid #a8a8bc;background:linear-gradient(#f4f4f8,#d8d8e4)"></div><div class="a" style="left:995px;top:108px;width:11px;height:11px;border:1px solid #8c8ca0;border-top:2px solid #8c8ca0;box-shadow:1px 1px 0 #fff"></div><div class="a" style="left:1013px;top:103px;width:21px;height:21px;border-radius:4px;border:1px solid #d08a8a;background:linear-gradient(#eab2b2,#e09a9a)"></div><svg class="a" style="left:1013px;top:103px" width="21" height="21"><path d="M5 5L16 16M16 5L5 16" stroke="#fff" stroke-width="2.2"/></svg><div class="a" style="left:70px;top:127px;width:966px;height:24px;background:linear-gradient(#fcfcff 0,#f2f2f8 2px,#eeeef6 7px,#e6e6ee 12px,#d4d4e0 16px,#bcbad0 19px,#a8a4c4 22px,#a29ec0 23px,#8c8aa0 23px);border-radius:3px 3px 0 0"></div><div class="a" style="left:70px;top:151px;width:966px;height:870px;background:#fff;border-left:1px solid #9c9ca8"></div><div class="a" style="left:71px;top:151px;width:18px;height:860px;background:#dedee2"></div><div class="a" style="left:130px;top:151px;width:1px;height:860px;background:repeating-linear-gradient(#008080 0,#008080 1px,transparent 1px,transparent 2px)"></div><div class="a" style="left:1019px;top:151px;width:17px;height:860px;background:linear-gradient(90deg,#e8e8ee,#f8f8fa 6px,#fbfbfc)"></div><div class="a" style="left:1021px;top:152px;width:14px;height:16px;border:1px solid #e4e4dc;border-radius:2px;background:#f2f2ea"></div><svg class="a" style="left:1021px;top:152px" width="14" height="16"><path d="M3.5 10L7 6.5L10.5 10" fill="none" stroke="#c4c4bc" stroke-width="2"/></svg><div class="a" style="left:1021px;top:995px;width:14px;height:16px;border:1px solid #e4e4dc;border-radius:2px;background:#f2f2ea"></div><svg class="a" style="left:1021px;top:995px" width="14" height="16"><path d="M3.5 6L7 9.5L10.5 6" fill="none" stroke="#c4c4bc" stroke-width="2"/></svg><div class="a" style="left:1036px;top:126px;width:2px;height:900px;background:linear-gradient(90deg,#9c9cac,#c8c8d4)"></div><div class="a" style="left:71px;top:1011px;width:965px;height:6px;background:#e8e8ee"></div><div class="a" style="left:72px;top:1012px;width:15px;height:8px;background:#fff;border:1px solid #b4b4c0;border-radius:2px"></div><div class="a" style="left:89px;top:1012px;width:803px;height:8px;background:linear-gradient(#fff,#f4f4f8);border:1px solid #b4b4c0;border-radius:2px"></div><div class="a" style="left:1002px;top:1012px;width:16px;height:8px;background:#fff;border:1px solid #b4b4c0;border-radius:2px"></div><svg class="a" width="1680" height="1050"><line x1="136.5" y1="231" x2="136.5" y2="789" stroke="#808080"/><rect x="132.5" y="155.5" width="8" height="8" fill="#fff" stroke="#808080"/><line x1="134" y1="159.5" x2="139" y2="159.5" stroke="#808080"/><line x1="136.5" y1="157" x2="136.5" y2="162" stroke="#808080"/><rect x="132.5" y="223.5" width="8" height="8" fill="#fff" stroke="#808080"/><line x1="134" y1="227.5" x2="139" y2="227.5" stroke="#808080"/><rect x="132.5" y="240.5" width="8" height="8" fill="#fff" stroke="#808080"/><line x1="134" y1="244.5" x2="139" y2="244.5" stroke="#808080"/><rect x="132.5" y="325.5" width="8" height="8" fill="#fff" stroke="#808080"/><line x1="134" y1="329.5" x2="139" y2="329.5" stroke="#808080"/><rect x="132.5" y="342.5" width="8" height="8" fill="#fff" stroke="#808080"/><line x1="134" y1="346.5" x2="139" y2="346.5" stroke="#808080"/><line x1="136.5" y1="344" x2="136.5" y2="349" stroke="#808080"/><rect x="132.5" y="376.5" width="8" height="8" fill="#fff" stroke="#808080"/><line x1="134" y1="380.5" x2="139" y2="380.5" stroke="#808080"/><rect x="132.5" y="444.5" width="8" height="8" fill="#fff" stroke="#808080"/><line x1="134" y1="448.5" x2="139" y2="448.5" stroke="#808080"/><rect x="132.5" y="529.5" width="8" height="8" fill="#fff" stroke="#808080"/><line x1="134" y1="533.5" x2="139" y2="533.5" stroke="#808080"/><rect x="132.5" y="597.5" width="8" height="8" fill="#fff" stroke="#808080"/><line x1="134" y1="601.5" x2="139" y2="601.5" stroke="#808080"/><rect x="132.5" y="750.5" width="8" height="8" fill="#fff" stroke="#808080"/><line x1="134" y1="754.5" x2="139" y2="754.5" stroke="#808080"/><line x1="136.5" y1="752" x2="136.5" y2="757" stroke="#808080"/><rect x="132.5" y="818.5" width="8" height="8" fill="#fff" stroke="#808080"/><line x1="134" y1="822.5" x2="139" y2="822.5" stroke="#808080"/><line x1="136.5" y1="820" x2="136.5" y2="825" stroke="#808080"/><line x1="136" y1="279.5" x2="141" y2="279.5" stroke="#808080"/><line x1="136" y1="415.5" x2="141" y2="415.5" stroke="#808080"/><line x1="136" y1="500.5" x2="141" y2="500.5" stroke="#808080"/><line x1="136" y1="568.5" x2="141" y2="568.5" stroke="#808080"/><line x1="136" y1="721.5" x2="141" y2="721.5" stroke="#808080"/><line x1="136" y1="772.5" x2="141" y2="772.5" stroke="#808080"/><line x1="136" y1="789.5" x2="141" y2="789.5" stroke="#808080"/><line x1="177.5" y1="338" x2="177.5" y2="780" stroke="#e6e6e6"/><line x1="209.5" y1="457" x2="209.5" y2="508" stroke="#e6e6e6"/><line x1="209.5" y1="610" x2="209.5" y2="729" stroke="#e6e6e6"/><line x1="241.5" y1="644" x2="241.5" y2="695" stroke="#e6e6e6"/></svg><div class="a code" style="left:89px;top:151px;width:38px;text-align:right;color:#008080">1</div><div class="a" style="left:144px;top:151px;border:1px solid #808080;border-radius:1px;height:17px;width:146px"></div><div class="a code" style="left:145px;top:151px;color:#808080">Using declarations</div><div class="a code" style="left:89px;top:168px;width:38px;text-align:right;color:#008080">14</div><div class="a code" style="left:89px;top:185px;width:38px;text-align:right;color:#008080">15</div><div class="a code" style="left:145px;top:185px"><span style="color:#008000">// This namespace holds all strategies and is required. Do not change it.</span></div><div class="a code" style="left:89px;top:202px;width:38px;text-align:right;color:#008080">16</div><div class="a code" style="left:145px;top:202px"><span style="color:#0000ff">namespace</span><span style="color:#000"> NinjaTrader.Strategy</span></div><div class="a code" style="left:89px;top:219px;width:38px;text-align:right;color:#008080">17</div><div class="a code" style="left:145px;top:219px"><span style="color:#000">{</span></div><div class="a code" style="left:89px;top:236px;width:38px;text-align:right;color:#008080">18</div><div class="a code" style="left:177px;top:236px"><span style="color:#808080">/// &lt;summary&gt;</span></div><div class="a code" style="left:89px;top:253px;width:38px;text-align:right;color:#008080">19</div><div class="a code" style="left:177px;top:253px"><span style="color:#808080">///</span><span style="color:#008000"> all ma lined up in order...just 5ma &gt; 13ma, 13ma&gt; 34ma, down arrow</span></div><div class="a code" style="left:89px;top:270px;width:38px;text-align:right;color:#008080">20</div><div class="a code" style="left:177px;top:270px"><span style="color:#808080">/// &lt;/summary&gt;</span></div><div class="a code" style="left:89px;top:287px;width:38px;text-align:right;color:#008080">21</div><div class="a code" style="left:177px;top:287px"><span style="color:#000">[Description(</span><span style="color:#800000">"all ma lined up in order...just 5ma &gt; 13ma, 13ma&gt; 34ma, down arrow"</span><span style="color:#000">)]</span></div><div class="a code" style="left:89px;top:304px;width:38px;text-align:right;color:#008080">22</div><div class="a code" style="left:177px;top:304px"><span style="color:#0000ff">public class</span><span style="color:#000"> FIVEmaLessThan13ma : Strategy</span></div><div class="a code" style="left:89px;top:321px;width:38px;text-align:right;color:#008080">23</div><div class="a code" style="left:177px;top:321px"><span style="color:#000">{</span></div><div class="a code" style="left:89px;top:338px;width:38px;text-align:right;color:#008080">24</div><div class="a" style="left:208px;top:338px;border:1px solid #808080;border-radius:1px;height:17px;width:74px"></div><div class="a code" style="left:209px;top:338px;color:#808080">Variables</div><div class="a code" style="left:89px;top:355px;width:38px;text-align:right;color:#008080">29</div><div class="a code" style="left:89px;top:372px;width:38px;text-align:right;color:#008080">30</div><div class="a code" style="left:209px;top:372px"><span style="color:#808080">/// &lt;summary&gt;</span></div><div class="a code" style="left:89px;top:389px;width:38px;text-align:right;color:#008080">31</div><div class="a code" style="left:209px;top:389px"><span style="color:#808080">///</span><span style="color:#008000"> This method is used to configure the strategy and is called once before any strategy method is ca</span></div><div class="a code" style="left:89px;top:406px;width:38px;text-align:right;color:#008080">32</div><div class="a code" style="left:209px;top:406px"><span style="color:#808080">/// &lt;/summary&gt;</span></div><div class="a code" style="left:89px;top:423px;width:38px;text-align:right;color:#008080">33</div><div class="a code" style="left:209px;top:423px"><span style="color:#0000ff">protected override void</span><span style="color:#000"> Initialize()</span></div><div class="a code" style="left:89px;top:440px;width:38px;text-align:right;color:#008080">34</div><div class="a code" style="left:209px;top:440px"><span style="color:#000">{</span></div><div class="a code" style="left:89px;top:457px;width:38px;text-align:right;color:#008080">35</div><div class="a code" style="left:89px;top:474px;width:38px;text-align:right;color:#008080">36</div><div class="a code" style="left:241px;top:474px"><span style="color:#000">CalculateOnBarClose = </span><span style="color:#0000ff">true</span><span style="color:#000">;</span></div><div class="a code" style="left:89px;top:491px;width:38px;text-align:right;color:#008080">37</div><div class="a code" style="left:209px;top:491px"><span style="color:#000">}</span></div><div class="a code" style="left:89px;top:508px;width:38px;text-align:right;color:#008080">38</div><div class="a code" style="left:89px;top:525px;width:38px;text-align:right;color:#008080">39</div><div class="a code" style="left:209px;top:525px"><span style="color:#808080">/// &lt;summary&gt;</span></div><div class="a code" style="left:89px;top:542px;width:38px;text-align:right;color:#008080">40</div><div class="a code" style="left:209px;top:542px"><span style="color:#808080">///</span><span style="color:#008000"> Called on each bar update event (incoming tick)</span></div><div class="a code" style="left:89px;top:559px;width:38px;text-align:right;color:#008080">41</div><div class="a code" style="left:209px;top:559px"><span style="color:#808080">/// &lt;/summary&gt;</span></div><div class="a code" style="left:89px;top:576px;width:38px;text-align:right;color:#008080">42</div><div class="a code" style="left:209px;top:576px"><span style="color:#0000ff">protected override void</span><span style="color:#000"> OnBarUpdate()</span></div><div class="a code" style="left:89px;top:593px;width:38px;text-align:right;color:#008080">43</div><div class="a code" style="left:209px;top:593px"><span style="color:#000">{</span></div><div class="a code" style="left:89px;top:610px;width:38px;text-align:right;color:#008080">44</div><div class="a code" style="left:241px;top:610px"><span style="color:#008000">// Condition set 1</span></div><div class="a code" style="left:89px;top:627px;width:38px;text-align:right;color:#008080">45</div><div class="a code" style="left:241px;top:627px"><span style="color:#0000ff">if</span><span style="color:#000"> (EMA(</span><span style="color:#800080">5</span><span style="color:#000">)[</span><span style="color:#800080">1</span><span style="color:#000">] &lt; EMA(</span><span style="color:#800080">13</span><span style="color:#000">)[</span><span style="color:#800080">1</span><span style="color:#000">]</span></div><div class="a code" style="left:89px;top:644px;width:38px;text-align:right;color:#008080">46</div><div class="a code" style="left:273px;top:644px"><span style="color:#000">&amp;&amp; EMA(</span><span style="color:#800080">13</span><span style="color:#000">)[</span><span style="color:#800080">1</span><span style="color:#000">] &lt; EMA(</span><span style="color:#800080">34</span><span style="color:#000">)[</span><span style="color:#800080">1</span><span style="color:#000">])</span></div><div class="a code" style="left:89px;top:661px;width:38px;text-align:right;color:#008080">47</div><div class="a code" style="left:241px;top:661px"><span style="color:#000">{</span></div><div class="a code" style="left:89px;top:678px;width:38px;text-align:right;color:#008080">48</div><div class="a code" style="left:273px;top:678px"><span style="color:#000">DrawArrowDown(</span><span style="color:#800000">"My down arrow"</span><span style="color:#000"> + CurrentBar, </span><span style="color:#0000ff">true</span><span style="color:#000">, </span><span style="color:#800080">1</span><span style="color:#000">, </span><span style="color:#800080">1</span><span style="color:#000">, Color.Red);</span></div><div class="a code" style="left:89px;top:695px;width:38px;text-align:right;color:#008080">49</div><div class="a code" style="left:241px;top:695px"><span style="color:#000">}</span></div><div class="a code" style="left:89px;top:712px;width:38px;text-align:right;color:#008080">50</div><div class="a code" style="left:209px;top:712px"><span style="color:#000">}</span></div><div class="a code" style="left:89px;top:729px;width:38px;text-align:right;color:#008080">51</div><div class="a code" style="left:89px;top:746px;width:38px;text-align:right;color:#008080">52</div><div class="a" style="left:208px;top:746px;border:1px solid #808080;border-radius:1px;height:17px;width:82px"></div><div class="a code" style="left:209px;top:746px;color:#808080">Properties</div><div class="a code" style="left:89px;top:763px;width:38px;text-align:right;color:#008080">61</div><div class="a code" style="left:177px;top:763px"><span style="color:#000">}</span></div><div class="a code" style="left:89px;top:780px;width:38px;text-align:right;color:#008080">62</div><div class="a code" style="left:145px;top:780px"><span style="color:#000">}</span></div><div class="a code" style="left:89px;top:797px;width:38px;text-align:right;color:#008080">63</div><div class="a code" style="left:89px;top:814px;width:38px;text-align:right;color:#008080">64</div><div class="a" style="left:144px;top:814px;border:1px solid #808080;border-radius:1px;height:17px;width:338px"></div><div class="a code" style="left:145px;top:814px;color:#808080">Wizard settings, neither change nor remove</div><div class="a code" style="left:89px;top:831px;width:38px;text-align:right;color:#008080">558</div><svg class="a" width="1680" height="1050"><rect x="73" y="131" width="2" height="2" fill="#2a2a50"/><rect x="75" y="133" width="1" height="1" fill="#fff"/><rect x="73" y="134" width="2" height="2" fill="#2a2a50"/><rect x="75" y="136" width="1" height="1" fill="#fff"/><rect x="73" y="137" width="2" height="2" fill="#2a2a50"/><rect x="75" y="139" width="1" height="1" fill="#fff"/><rect x="73" y="140" width="2" height="2" fill="#2a2a50"/><rect x="75" y="142" width="1" height="1" fill="#fff"/><rect x="73" y="143" width="2" height="2" fill="#2a2a50"/><rect x="75" y="145" width="1" height="1" fill="#fff"/><rect x="83.5" y="132.5" width="13" height="13" fill="#3838b0" stroke="#202080"/><rect x="86" y="133" width="8" height="6" fill="#f4f4ff"/><rect x="87" y="141" width="6" height="4" fill="#fff"/><rect x="87" y="141" width="2" height="3" fill="#000"/><path d="M108 133h9l1 4h-11z" fill="#f4f4f4" stroke="#909098"/><rect x="105.5" y="137.5" width="14" height="7" rx="1" fill="#e0e4f0" stroke="#5a6aa0"/><rect x="115" y="140" width="2" height="2" fill="#00d000"/><path d="M129.5 132.5h7l3 3v10h-10z" fill="#fff" stroke="#5060a0"/><circle cx="135" cy="139" r="3" fill="#e8f4ff" stroke="#707080"/><path d="M137 141l4 4" stroke="#e08030" stroke-width="2"/><rect x="154.5" y="132.5" width="11" height="9" fill="#dceeff" stroke="#2030c0" stroke-dasharray="2 1"/><path d="M157 145l3-3 3 3" fill="none" stroke="#2030c0"/><line x1="174.5" y1="132" x2="174.5" y2="146" stroke="#6a6a8c"/><line x1="175.5" y1="132" x2="175.5" y2="146" stroke="#fff"/><path d="M184 132l4 8M190 132l-4 8" stroke="#a8a8b0" stroke-width="1.5"/><circle cx="185" cy="143" r="2.2" fill="none" stroke="#a8a8b0" stroke-width="1.3"/><circle cx="190" cy="143" r="2.2" fill="none" stroke="#a8a8b0" stroke-width="1.3"/><rect x="204.5" y="134.5" width="7" height="8" fill="#f0f0f4" stroke="#b0b0b8"/><rect x="209.5" y="137.5" width="8" height="8" fill="#f0f0f4" stroke="#b0b0b8"/><rect x="227.5" y="134.5" width="9" height="11" fill="#d8d8dc" stroke="#b0b0b8"/><rect x="233.5" y="139.5" width="8" height="6" fill="#f0f0f4" stroke="#b0b0b8"/><path d="M251 133l11 12M262 133l-11 12" stroke="#a8a8b0" stroke-width="2"/><line x1="272.5" y1="132" x2="272.5" y2="146" stroke="#6a6a8c"/><line x1="273.5" y1="132" x2="273.5" y2="146" stroke="#fff"/><path d="M283 137c3-3 8-2 8 3s-4 5-6 6" fill="none" stroke="#b8b8c0" stroke-width="2"/><path d="M280 134v6h6z" fill="#b8b8c0"/><path d="M312 137c-3-3-8-2-8 3s4 5 6 6" fill="none" stroke="#b8b8c0" stroke-width="2"/><path d="M315 134v6h-6z" fill="#b8b8c0"/><line x1="324.5" y1="132" x2="324.5" y2="146" stroke="#6a6a8c"/><line x1="325.5" y1="132" x2="325.5" y2="146" stroke="#fff"/><rect x="330.5" y="137.5" width="6" height="8" fill="#3060c0" stroke="#102060"/><rect x="338.5" y="137.5" width="6" height="8" fill="#3060c0" stroke="#102060"/><rect x="331.5" y="133.5" width="4" height="4" fill="#80a0e0" stroke="#102060"/><rect x="339.5" y="133.5" width="4" height="4" fill="#80a0e0" stroke="#102060"/><rect x="332" y="140" width="3" height="4" fill="#fff"/><rect x="340" y="140" width="3" height="4" fill="#fff"/><rect x="354.5" y="132.5" width="14" height="13" fill="#fff" stroke="#203080"/><path d="M356 138l3 3 3-3M362 138l3 3 3-3" fill="#2080e0" stroke="#2080e0"/><path d="M356 143.5h11" stroke="#203080" stroke-dasharray="1 1"/><path d="M382 134.5h10M382 137.5h10M382 140.5h10M378 143.5h14" stroke="#909098" stroke-width="1.3"/><path d="M377 138l4-3v6z" fill="#a0a0a8"/><path d="M405 134.5h10M405 137.5h10M405 140.5h10M401 143.5h14" stroke="#909098" stroke-width="1.3"/><path d="M404 138l-4-3v6z" fill="#a0a0a8"/><line x1="422.5" y1="132" x2="422.5" y2="146" stroke="#6a6a8c"/><line x1="423.5" y1="132" x2="423.5" y2="146" stroke="#fff"/><path d="M429 134.5h13M431 138h11M431 141.5h11M429 145h13" stroke="#909098" stroke-width="1.3"/><path d="M453 145h12M455 141.5h10M455 138h10" stroke="#909098" stroke-width="1.3"/><path d="M457 135c1-3 6-3 6 0s-4 2-6 1" fill="none" stroke="#909098" stroke-width="1.3"/><path d="M453 133l4 0-2 3z" fill="#909098"/></svg><svg class="a" width="1680" height="1050"><defs>
<linearGradient id="pg" x1="0" y1="0" x2="0" y2="1"><stop offset="0" stop-color="#8fa6c8"/><stop offset="0.5" stop-color="#b4c6e0"/><stop offset="1" stop-color="#e4ebf4"/></linearGradient>
<linearGradient id="hg" x1="0" y1="0" x2="0" y2="1"><stop offset="0" stop-color="#f0f4fa"/><stop offset="1" stop-color="#b8cae2"/></linearGradient>
<filter id="sh" x="-20%" y="-20%" width="140%" height="140%"><feGaussianBlur stdDeviation="2.5"/></filter>
</defs>
<rect x="806" y="146" width="172" height="125" rx="19" fill="#000" opacity="0.35" filter="url(#sh)"/>
<path d="M946 76L936 142L918 142z" fill="#000" opacity="0.3" filter="url(#sh)"/>
<rect x="802.5" y="141.5" width="172" height="125" rx="19" fill="#a4b8d6" stroke="#6a6a6a"/>
<path d="M911.5 142L946.5 75.5Q935 105 931.5 142z" fill="url(#pg)" stroke="#6a6a6a"/>
<rect x="912.5" y="140.5" width="19" height="3" fill="#e4ebf4"/>
<rect x="812" y="143" width="153" height="14" rx="7" fill="url(#hg)"/>
</svg><div class="a" style="left:803px;top:174px;width:172px;text-align:center;font:15px/18.5px 'Liberation Sans', sans-serif;color:#2c4470">why is the chart<br>indicators all<br>scrunched up?</div><div class="a" style="left:0;top:1016px;width:1680px;height:34px;background:linear-gradient(#a8a8c0 0,#a8a8c0 1px,#fff 1px,#fff 2px,#7c7c9c 2px,#7c7c9c 4px,#f0f0f6 4px,#e0e0e8 7px,#9a9ab2 7px,#a6a6be 15px,#b4b6c4 16px,#c8c8d0 20px,#d4d4d8 21px,#e6e6e8 31px,#8c8ca4 31px)"></div><div class="a" style="left:0;top:1019px;width:98px;height:31px;border-radius:0 16px 16px 0/0 50% 50% 0;background:linear-gradient(#1d7a1d 0,#1d7a1d 1px,#8ed48e 1px,#a8dea8 4px,#d8f0d8 5.5px,#78c878 7px,#5cb85c 10px,#3a9a3a 19px,#2e8e2e 25px,#48a848 28px,#1d6a1d 31px);box-shadow:inset -2px 0 2px #1a6a1a"></div><div class="a" style="left:35px;top:1024px;font:italic bold 18px/24px 'Liberation Sans', sans-serif;color:#fff;text-shadow:1px 1px 1px #1a4a1a">start</div><svg class="a" style="left:10px;top:1026px" width="20" height="18"><g transform="skewY(-6) translate(0 2)"><path d="M2 1c3-1 5-1 7 0v7c-2-1-4-1-7 0z" fill="#f06020"/><path d="M10 1c3 1 5 1 8 0v7c-3 1-5 1-8 0z" fill="#7ad020"/><path d="M1 9c3-1 5-1 8 0v7c-3-1-5-1-8 0z" fill="#3a80f0"/><path d="M10 9c3 1 5 1 7 0v7c-2 1-4 1-7 0z" fill="#f8c818"/></g></svg><svg class="a" style="left:104px;top:1024px" width="6" height="24"><rect x="1" y="1" width="2" height="2" fill="#8888a0"/><rect x="2" y="4" width="2" height="2" fill="#8888a0"/><rect x="1" y="7" width="2" height="2" fill="#8888a0"/><rect x="2" y="10" width="2" height="2" fill="#8888a0"/><rect x="1" y="13" width="2" height="2" fill="#8888a0"/><rect x="2" y="16" width="2" height="2" fill="#8888a0"/><rect x="1" y="19" width="2" height="2" fill="#8888a0"/><rect x="2" y="22" width="2" height="2" fill="#8888a0"/></svg><div class="a" style="left:117px;top:1023px;width:158px;height:25px;border:1px solid #868690;border-bottom-width:2px;border-radius:2px;box-shadow:inset 1px 1px 0 #fff,inset -1px 0 0 #fff;background:linear-gradient(#ffffff,#f6f6f8 30%,#d0d2de 55%,#c8cad8)"></div><div class="a" style="left:145px;top:1029px;font:11px/13px 'Liberation Sans', sans-serif;color:#000;white-space:pre">Control Center - 9min...</div><svg class="a" style="left:128px;top:1027px" width="16" height="16"><path d="M8 1L15 8L8 15L1 8z" fill="#d0d0d8" stroke="#8c8c98"/><path d="M8 5L11 8L8 11L5 8z" fill="#fff" stroke="#a0a0a8"/></svg><div class="a" style="left:277px;top:1023px;width:158px;height:25px;border:1px solid #868690;border-bottom-width:2px;border-radius:2px;box-shadow:inset 1px 1px 0 #fff,inset -1px 0 0 #fff;background:linear-gradient(#ffffff,#f6f6f8 30%,#d0d2de 55%,#c8cad8)"></div><div class="a" style="left:305px;top:1029px;font:11px/13px 'Liberation Sans', sans-serif;color:#000;white-space:pre">$GBPJPY  4/19/2010 ...</div><svg class="a" style="left:287px;top:1027px" width="16" height="16"><rect x="1.5" y="1.5" width="13" height="13" fill="#fff" stroke="#6a7ab8"/><path d="M2 11L6 6L9 9L14 3" fill="none" stroke="#30a030" stroke-width="1.5"/><path d="M2 13L6 9L10 10L14 6" fill="none" stroke="#3060d0" stroke-width="1"/></svg><div class="a" style="left:437px;top:1023px;width:158px;height:25px;border:1px solid #868690;border-bottom-width:2px;border-radius:2px;box-shadow:inset 1px 1px 0 #fff,inset -1px 0 0 #fff;background:linear-gradient(#ffffff,#f6f6f8 30%,#d0d2de 55%,#c8cad8)"></div><div class="a" style="left:465px;top:1029px;font:11px/13px 'Liberation Sans', sans-serif;color:#000;white-space:pre">$GBPJPY  4/18/2010 ...</div><svg class="a" style="left:447px;top:1027px" width="16" height="16"><rect x="1.5" y="1.5" width="13" height="13" fill="#fff" stroke="#6a7ab8"/><path d="M2 11L6 6L9 9L14 3" fill="none" stroke="#30a030" stroke-width="1.5"/><path d="M2 13L6 9L10 10L14 6" fill="none" stroke="#3060d0" stroke-width="1"/></svg><div class="a" style="left:597px;top:1023px;width:158px;height:25px;border:1px solid #868690;border-bottom-width:2px;border-radius:2px;box-shadow:inset 1px 1px 0 #fff,inset -1px 0 0 #fff;background:linear-gradient(#ffffff,#f6f6f8 30%,#d0d2de 55%,#c8cad8)"></div><div class="a" style="left:625px;top:1029px;font:11px/13px 'Liberation Sans', sans-serif;color:#000;white-space:pre">Edit Strategy</div><svg class="a" style="left:608px;top:1027px" width="16" height="16"><path d="M8 1L15 8L8 15L1 8z" fill="#d0d0d8" stroke="#8c8c98"/><path d="M8 5L11 8L8 11L5 8z" fill="#fff" stroke="#a0a0a8"/></svg><div class="a" style="left:757px;top:1023px;width:158px;height:25px;border:1px solid #868690;border-bottom-width:2px;border-radius:2px;box-shadow:inset 1px 1px 0 #fff,inset -1px 0 0 #fff;background:linear-gradient(#ffffff,#f6f6f8 30%,#d0d2de 55%,#c8cad8)"></div><div class="a" style="left:785px;top:1029px;font:11px/13px 'Liberation Sans', sans-serif;color:#000;white-space:pre">Strategy - FIVEmaLes...</div><svg class="a" style="left:767px;top:1027px" width="16" height="16"><g transform="rotate(-12 8 8)"><rect x="2.5" y="2.5" width="11" height="11" fill="#fce98a" stroke="#e8c23a"/><line x1="4" y1="5.5" x2="12" y2="5.5" stroke="#d9a928"/><line x1="4" y1="8" x2="12" y2="8" stroke="#d9a928"/><line x1="4" y1="10.5" x2="12" y2="10.5" stroke="#d9a928"/></g></svg><svg class="a" style="left:1210px;top:1024px" width="6" height="24"><rect x="1" y="1" width="2" height="2" fill="#8888a0"/><rect x="2" y="4" width="2" height="2" fill="#8888a0"/><rect x="1" y="7" width="2" height="2" fill="#8888a0"/><rect x="2" y="10" width="2" height="2" fill="#8888a0"/><rect x="1" y="13" width="2" height="2" fill="#8888a0"/><rect x="2" y="16" width="2" height="2" fill="#8888a0"/><rect x="1" y="19" width="2" height="2" fill="#8888a0"/><rect x="2" y="22" width="2" height="2" fill="#8888a0"/></svg><div class="a" style="left:1219px;top:1029px;font:12px/14px 'Liberation Sans', sans-serif;color:#000;white-space:pre">Syst Utilty</div><svg class="a" style="left:1277px;top:1026px" width="10" height="8"><path d="M1 1l3 3-3 3M5 1l3 3-3 3" fill="none" stroke="#000" stroke-width="1.6"/></svg><svg class="a" style="left:1292px;top:1024px" width="6" height="24"><rect x="1" y="1" width="2" height="2" fill="#8888a0"/><rect x="2" y="4" width="2" height="2" fill="#8888a0"/><rect x="1" y="7" width="2" height="2" fill="#8888a0"/><rect x="2" y="10" width="2" height="2" fill="#8888a0"/><rect x="1" y="13" width="2" height="2" fill="#8888a0"/><rect x="2" y="16" width="2" height="2" fill="#8888a0"/><rect x="1" y="19" width="2" height="2" fill="#8888a0"/><rect x="2" y="22" width="2" height="2" fill="#8888a0"/></svg><div class="a" style="left:1301px;top:1029px;font:12px/14px 'Liberation Sans', sans-serif;color:#000;white-space:pre">GTD</div><svg class="a" style="left:1330px;top:1026px" width="10" height="8"><path d="M1 1l3 3-3 3M5 1l3 3-3 3" fill="none" stroke="#000" stroke-width="1.6"/></svg><svg class="a" style="left:1345px;top:1024px" width="6" height="24"><rect x="1" y="1" width="2" height="2" fill="#8888a0"/><rect x="2" y="4" width="2" height="2" fill="#8888a0"/><rect x="1" y="7" width="2" height="2" fill="#8888a0"/><rect x="2" y="10" width="2" height="2" fill="#8888a0"/><rect x="1" y="13" width="2" height="2" fill="#8888a0"/><rect x="2" y="16" width="2" height="2" fill="#8888a0"/><rect x="1" y="19" width="2" height="2" fill="#8888a0"/><rect x="2" y="22" width="2" height="2" fill="#8888a0"/></svg><div class="a" style="left:1354px;top:1029px;font:12px/14px 'Liberation Sans', sans-serif;color:#000;white-space:pre">MediaApps</div><svg class="a" style="left:1415px;top:1026px" width="10" height="8"><path d="M1 1l3 3-3 3M5 1l3 3-3 3" fill="none" stroke="#000" stroke-width="1.6"/></svg><svg class="a" style="left:1430px;top:1024px" width="6" height="24"><rect x="1" y="1" width="2" height="2" fill="#8888a0"/><rect x="2" y="4" width="2" height="2" fill="#8888a0"/><rect x="1" y="7" width="2" height="2" fill="#8888a0"/><rect x="2" y="10" width="2" height="2" fill="#8888a0"/><rect x="1" y="13" width="2" height="2" fill="#8888a0"/><rect x="2" y="16" width="2" height="2" fill="#8888a0"/><rect x="1" y="19" width="2" height="2" fill="#8888a0"/><rect x="2" y="22" width="2" height="2" fill="#8888a0"/></svg><div class="a" style="left:1439px;top:1029px;font:12px/14px 'Liberation Sans', sans-serif;color:#000;white-space:pre">platforms</div><svg class="a" style="left:1493px;top:1026px" width="10" height="8"><path d="M1 1l3 3-3 3M5 1l3 3-3 3" fill="none" stroke="#000" stroke-width="1.6"/></svg><div class="a" style="left:1515px;top:1017px;width:165px;height:33px;background:linear-gradient(#a8a8c0 0,#a8a8c0 1px,#fdfdfe 2px,#f8f8fb 6px,#e4e4ee 14px,#ccccdc 24px,#b8b8cc 30px,#9c9cb4 33px);border-left:2px solid #a0a0b4"></div><svg class="a" style="left:1505px;top:1025px" width="112" height="22"><defs><radialGradient id="sg" cx="0.35" cy="0.3" r="0.8"><stop offset="0" stop-color="#f4f4fa"/><stop offset="1" stop-color="#8c8ca8"/></radialGradient></defs><circle cx="10" cy="10" r="8.5" fill="url(#sg)" stroke="#8a8aa4"/><path d="M12 6L8 10L12 14" fill="none" stroke="#fff" stroke-width="2.2"/><circle cx="29" cy="10" r="7.5" fill="#b01010"/><path d="M22 4a7.5 7.5 0 0 0 0 12z" fill="#300"/><path d="M26 4.5l8 5.5-8 5.5z" fill="#fff"/><path d="M28 8.5l2 1.5-2 1.5z" fill="#c01010"/><circle cx="46" cy="10" r="6.5" fill="none" stroke="#e8c020" stroke-width="2.5" stroke-dasharray="10 31"/><circle cx="46" cy="10" r="6.5" fill="none" stroke="#30a040" stroke-width="2.5" stroke-dasharray="10 31" stroke-dashoffset="-10"/><circle cx="46" cy="10" r="6.5" fill="none" stroke="#e03030" stroke-width="2.5" stroke-dasharray="10 31" stroke-dashoffset="-20"/><circle cx="46" cy="10" r="6.5" fill="none" stroke="#3070d0" stroke-width="2.5" stroke-dasharray="11 31" stroke-dashoffset="-30"/><path d="M43 13c1-4 4-6 7-6" fill="none" stroke="#3070d0" stroke-width="2"/><circle cx="62" cy="9" r="5.5" fill="#909098"/><circle cx="62" cy="9" r="2.5" fill="#c8c8d0"/><path d="M66 16a6 6 0 0 0 4-5M64 18a9 9 0 0 0 7-6" fill="none" stroke="#a0a0d0"/><path d="M77 3l4 2.5 4-2.5 4 2.5-4 2.5 4 2.5-4 2.5-4-2.5-4 2.5-4-2.5 4-2.5-4-2.5z" fill="#4a90e0"/><circle cx="86" cy="15" r="4" fill="#2a9a3a"/><path d="M84 15l1.5 1.5 2.5-3" fill="none" stroke="#fff" stroke-width="1.2"/><rect x="94" y="1" width="15" height="17" rx="2" fill="#000"/><path d="M98 4h7M98 4v5h7v6h-7" fill="none" stroke="#10e010" stroke-width="2"/></svg><div class="a" style="left:1623px;top:1029px;font:11px/14px 'Liberation Sans', sans-serif;color:#000">2:36 PM</div></body></html>
